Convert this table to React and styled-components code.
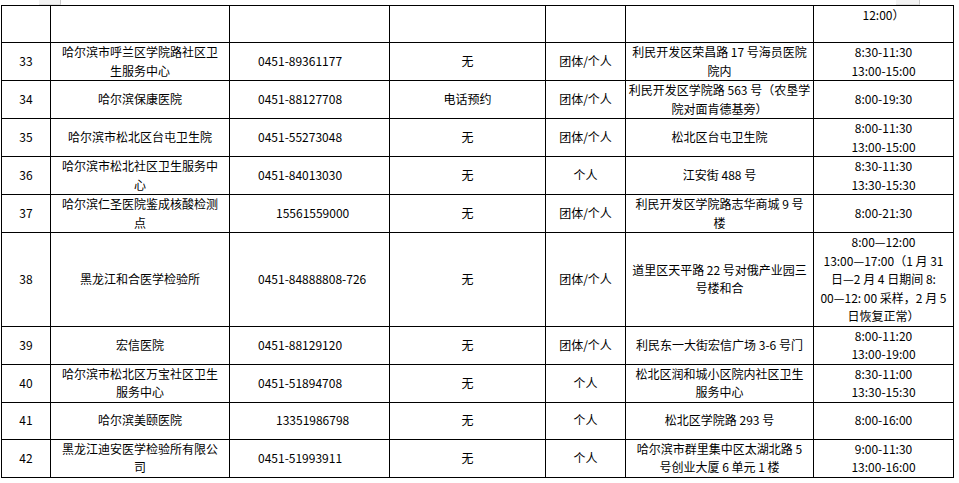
import React from 'react';
import styled, { createGlobalStyle } from 'styled-components';

const GlobalStyle = createGlobalStyle`
  html, body {
    margin: 0;
    padding: 0;
    background: #fff;
  }
`;

const Page = styled.div`
  position: relative;
  width: 959px;
  height: 483px;
  padding: 5px 0 0 1px;
  box-sizing: border-box;
  overflow: hidden;
  background: #fff;
`;

// bits of the previous page's grid peeking in at the top edge
const Stub = styled.span`
  position: absolute;
  top: 0;
  left: ${({ $left }) => $left}px;
  width: ${({ $w }) => $w}px;
  height: 4px;
  background: #f3f3f3;
  border-right: 1px solid #c8c8c8;
  border-bottom: 1px solid #e0e0e0;
`;

const Table = styled.table`
  border-collapse: collapse;
  table-layout: fixed;
  width: 952px;
  font-family: "Noto Sans CJK SC", "Noto Sans", sans-serif;
  font-size: 12px;
  line-height: 18.5px;
  color: #000;
`;

const Row = styled.tr`
  height: ${({ $h = 37 }) => $h}px;
`;

const Cell = styled.td`
  border: 1px solid #000;
  padding: 0 2px 0 ${({ $indent = 2 }) => $indent}px;
  text-align: ${({ $align = 'center' }) => $align};
  vertical-align: ${({ $top }) => ($top ? 'top' : 'middle')};
  line-height: 18.5px;
  white-space: nowrap;
  overflow: hidden;
`;

const widths = [49, 179, 160, 156, 80, 188, 140];

const rows = [
  {
    no: '33',
    name: ['哈尔滨市呼兰区学院路社区卫', '生服务中心'],
    phone: '0451-89361177',
    book: '无',
    kind: '团体/个人',
    addr: ['利民开发区荣昌路 17 号海员医院', '院内'],
    hours: ['8:30-11:30', '13:00-15:00'],
  },
  {
    no: '34',
    name: ['哈尔滨保康医院'],
    phone: '0451-88127708',
    book: '电话预约',
    kind: '团体/个人',
    addr: ['利民开发区学院路 563 号（农垦学', '院对面肯德基旁）'],
    hours: ['8:00-19:30'],
  },
  {
    no: '35',
    name: ['哈尔滨市松北区台屯卫生院'],
    phone: '0451-55273048',
    book: '无',
    kind: '团体/个人',
    addr: ['松北区台屯卫生院'],
    hours: ['8:00-11:30', '13:00-15:00'],
  },
  {
    no: '36',
    name: ['哈尔滨市松北社区卫生服务中', '心'],
    phone: '0451-84013030',
    book: '无',
    kind: '个人',
    addr: ['江安街 488 号'],
    hours: ['8:30-11:30', '13:30-15:30'],
  },
  {
    no: '37',
    name: ['哈尔滨仁圣医院鉴成核酸检测', '点'],
    phone: '15561559000',
    mobile: true,
    book: '无',
    kind: '团体/个人',
    addr: ['利民开发区学院路志华商城 9 号', '楼'],
    hours: ['8:00-21:30'],
  },
  {
    no: '38',
    h: 93,
    name: ['黑龙江和合医学检验所'],
    phone: '0451-84888808-726',
    book: '无',
    kind: '团体/个人',
    addr: ['道里区天平路 22 号对俄产业园三', '号楼和合'],
    hours: [
      '8:00—12:00',
      '13:00—17:00（1 月 31',
      '日—2 月 4 日期间 8:',
      '00—12: 00 采样，2 月 5',
      '日恢复正常）',
    ],
  },
  {
    no: '39',
    name: ['宏信医院'],
    phone: '0451-88129120',
    book: '无',
    kind: '团体/个人',
    addr: ['利民东一大街宏信广场 3-6 号门'],
    hours: ['8:00-11:20', '13:00-19:00'],
  },
  {
    no: '40',
    name: ['哈尔滨市松北区万宝社区卫生', '服务中心'],
    phone: '0451-51894708',
    book: '无',
    kind: '个人',
    addr: ['松北区润和城小区院内社区卫生', '服务中心'],
    hours: ['8:30-11:00', '13:30-15:30'],
  },
  {
    no: '41',
    name: ['哈尔滨美颐医院'],
    phone: '13351986798',
    mobile: true,
    book: '无',
    kind: '个人',
    addr: ['松北区学院路 293 号'],
    hours: ['8:00-16:00'],
  },
  {
    no: '42',
    h: 36,
    name: ['黑龙江迪安医学检验所有限公', '司'],
    phone: '0451-51993911',
    book: '无',
    kind: '个人',
    addr: ['哈尔滨市群里集中区太湖北路 5', '号创业大厦 6 单元 1 楼'],
    hours: ['9:00-11:30', '13:00-16:00'],
  },
];

const Lines = ({ items }) =>
  items.map((t, i) => (
    <React.Fragment key={i}>
      {i > 0 && <br />}
      {t}
    </React.Fragment>
  ));

export default function App() {
  return (
    <Page>
      <GlobalStyle />
      <Stub $left={39} $w={21} />
      <Stub $left={896} $w={23} />
      <Table>
        <colgroup>
          {widths.map((w, i) => (
            <col key={i} style={{ width: w }} />
          ))}
        </colgroup>
        <tbody>
          <Row>
            <Cell />
            <Cell />
            <Cell />
            <Cell />
            <Cell />
            <Cell />
            <Cell $top>12:00）</Cell>
          </Row>
          {rows.map((r) => (
            <Row key={r.no} $h={r.h}>
              <Cell>{r.no}</Cell>
              <Cell><Lines items={r.name} /></Cell>
              <Cell $align="left" $indent={r.mobile ? 46 : 28}>{r.phone}</Cell>
              <Cell>{r.book}</Cell>
              <Cell>{r.kind}</Cell>
              <Cell><Lines items={r.addr} /></Cell>
              <Cell><Lines items={r.hours} /></Cell>
            </Row>
          ))}
        </tbody>
      </Table>
    </Page>
  );
}
